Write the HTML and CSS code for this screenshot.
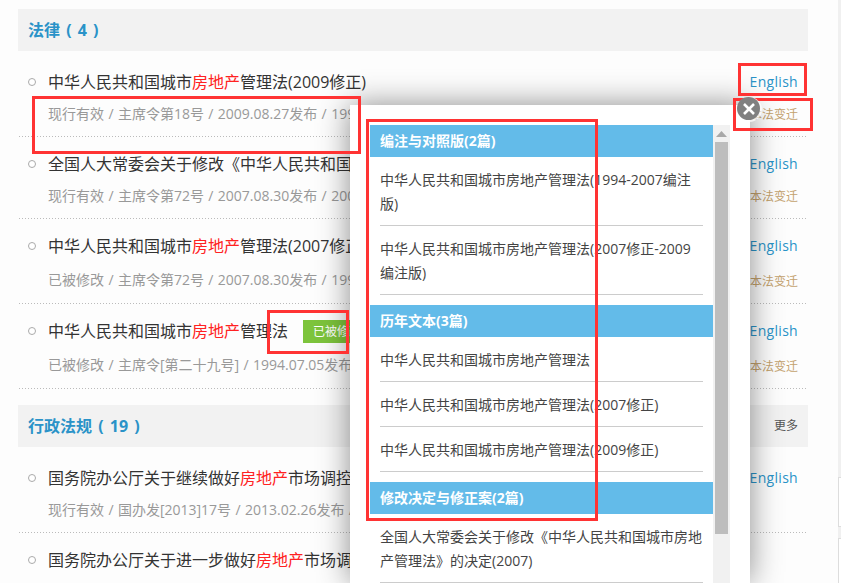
FILE: index.html
```html
<!DOCTYPE html>
<html lang="zh-CN">
<head>
<meta charset="utf-8">
<title>法律法规</title>
<link rel="stylesheet" href="styles.css">
</head>
<body>
<div class="layout">
  <main class="content">
    <section class="group">
      <header class="group-head"><h2 class="group-title">法律 ( 4 )</h2></header>
      <div class="row">
        <i class="bullet"></i>
        <div class="title">中华人民共和国城市<em>房地产</em>管理法(2009修正)</div>
        <a class="english">English</a>
        <div class="meta">现行有效 / 主席令第18号 / 2009.08.27发布 / 1995.01.01实施</div>
        <a class="history">本法变迁</a>
      </div>
      <div class="row">
        <i class="bullet"></i>
        <div class="title">全国人大常委会关于修改《中华人民共和国城市房地产管理法》的决定(2007)</div>
        <a class="english">English</a>
        <div class="meta">现行有效 / 主席令第72号 / 2007.08.30发布 / 2007.08.30实施</div>
        <a class="history">本法变迁</a>
      </div>
      <div class="row row-badged">
        <i class="bullet"></i>
        <div class="title">中华人民共和国城市<em>房地产</em>管理法(2007修正)</div>
        <a class="english">English</a>
        <div class="meta">已被修改 / 主席令第72号 / 2007.08.30发布 / 1995.01.01实施</div>
        <a class="history">本法变迁</a>
      </div>
      <div class="row row-badged">
        <i class="bullet"></i>
        <div class="title">中华人民共和国城市<em>房地产</em>管理法<span class="badge">已被修改</span></div>
        <a class="english">English</a>
        <div class="meta">已被修改 / 主席令[第二十九号] / 1994.07.05发布 / 1995.01.01实施</div>
        <a class="history">本法变迁</a>
      </div>
    </section>
    <section class="group">
      <header class="group-head"><h2 class="group-title">行政法规 ( 19 )</h2><a class="more">更多</a></header>
      <div class="row">
        <i class="bullet"></i>
        <div class="title">国务院办公厅关于继续做好<em>房地产</em>市场调控工作的通知</div>
        <a class="english">English</a>
        <div class="meta">现行有效 / 国办发[2013]17号 / 2013.02.26发布 / 2013.02.26实施</div>
      </div>
      <div class="row">
        <i class="bullet"></i>
        <div class="title">国务院办公厅关于进一步做好<em>房地产</em>市场调控工作有关问题的通知</div>
        <div class="meta">现行有效 / 国办发[2011]1号 / 2011.01.26发布 / 2011.01.26实施</div>
      </div>
    </section>
  </main>
  <aside class="rail">
    <div class="rail-box"></div>
    <div class="rail-box rail-box-last"></div>
  </aside>
</div>

<div class="popup">
  <div class="popup-list">
    <h3 class="popup-head">编注与对照版(2篇)</h3>
    <div class="popup-item">中华人民共和国城市房地产管理法(1994-2007编注版)</div>
    <div class="popup-item">中华人民共和国城市房地产管理法(2007修正-2009编注版)</div>
    <h3 class="popup-head">历年文本(3篇)</h3>
    <div class="popup-item">中华人民共和国城市房地产管理法</div>
    <div class="popup-item">中华人民共和国城市房地产管理法(2007修正)</div>
    <div class="popup-item">中华人民共和国城市房地产管理法(2009修正)</div>
    <h3 class="popup-head">修改决定与修正案(2篇)</h3>
    <div class="popup-item">全国人大常委会关于修改《中华人民共和国城市房地产管理法》的决定(2007)</div>
  </div>
  <div class="scrollbar">
    <svg class="scroll-arrow" width="11" height="6" viewBox="0 0 11 6"><path d="M5.5 0 L11 6 L0 6 Z" fill="#a8a8a8"/></svg>
    <div class="scroll-thumb"></div>
  </div>
</div>

<div class="mark mark-meta"></div>
<div class="mark mark-english"></div>
<div class="mark mark-history"></div>
<div class="mark mark-list"></div>
<div class="mark mark-badge"></div>

<button class="close" aria-label="关闭">
  <svg width="14" height="14" viewBox="0 0 14 14"><path d="M2 2 L12 12 M12 2 L2 12" stroke="#fff" stroke-width="2.6" fill="none"/></svg>
</button>
</body>
</html>
```
FILE: styles.css
```css
* { box-sizing: border-box; }
html, body { margin: 0; height: 583px; overflow: hidden; }
body {
  background: #fdfdfd;
  color: #333;
  font-family: "Open Sans", "Noto Sans CJK SC", sans-serif;
  position: relative;
}
.layout { display: flex; height: 583px; overflow: hidden; }
.content { width: 838px; flex: none; padding: 9px 30px 0 18px; }
.group { margin-bottom: 16px; }
.group-head {
  display: flex;
  justify-content: space-between;
  align-items: center;
  height: 42px;
  padding: 0 10px;
  margin-bottom: 4px;
  background: #f2f2f2;
}
.group-title { margin: 0 0 2px; font-size: 16px; font-weight: 700; color: #2a93c8; word-spacing: 2px; }
.more { font-size: 12px; color: #555; margin-bottom: 3px; }
.row {
  display: grid;
  grid-template-columns: 20px minmax(0, 1fr) auto;
  grid-template-rows: 24px 24px;
  row-gap: 8px;
  align-items: center;
  height: 82px;
  padding: 15px 10px 0;
  background-image: linear-gradient(to right, #bbb 50%, transparent 50%);
  background-size: 3px 1px;
  background-repeat: repeat-x;
  background-position: 0 100%;
  background-origin: content-box;
  background-clip: border-box;
}
.row-badged { height: 85px; row-gap: 10px; }
.row-badged .history { margin-top: 2px; }
.bullet {
  width: 8px;
  height: 8px;
  border: 1px solid #aaa;
  border-radius: 50%;
  background: #fff;
}
.title { font-size: 16px; line-height: 24px; white-space: nowrap; color: #333; }
.title em { font-style: normal; color: #f22; }
.badge {
  display: inline-block;
  margin-left: 15px;
  padding: 0 10px;
  height: 23px;
  line-height: 23px;
  font-size: 12px;
  color: #fff;
  background: #7dc43c;
  vertical-align: 1px;
}
.english { font-size: 14px; letter-spacing: .3px; color: #2a93c8; text-align: right; margin-bottom: 2px; }
.history { font-size: 12px; color: #c4a26e; text-align: right; grid-column: 3; }
.meta { grid-column: 2; font-size: 14px; word-spacing: .75px; color: #999; white-space: nowrap; margin-bottom: 2px; }

.rail { width: 3px; flex: none; background: #f0f0f0; padding-top: 477px; }
.rail-box { height: 50px; margin-bottom: 11px; background: #fff; border: 1px solid #ddd; border-right: 0; }
.rail-box-last { height: 60px; }

.popup {
  position: absolute;
  left: 350px;
  top: 105px;
  width: 400px;
  height: 478px;
  padding: 20px 20px 0;
  background: #fff;
  box-shadow: 0 0 30px rgba(0, 0, 0, .45);
  display: flex;
  overflow: hidden;
}
.popup-list { width: 343px; flex: none; }
.popup-head {
  margin: 10px 0 0;
  height: 32px;
  line-height: 32px;
  padding: 0 10px;
  font-size: 14px;
  font-weight: 700;
  color: #fff;
  background: #63bbe9;
}
.popup-head:first-child { margin-top: 0; }
.popup-item {
  margin: 0 10px;
  padding: 11px 0 9px;
  font-size: 14px;
  line-height: 24px;
  color: #444;
  border-bottom: 1px solid #ccc;
}
.scrollbar {
  width: 17px;
  flex: none;
  background: #f1f1f1;
  display: flex;
  flex-direction: column;
  align-items: center;
  height: 458px;
}
.scroll-arrow { margin: 6px 0 5px; flex: none; }
.scroll-thumb { width: 13px; height: 392px; background: #bdbdbd; }

.mark { position: absolute; border: 3px solid #f33; }
.mark-meta { left: 32px; top: 96px; width: 329px; height: 58px; }
.mark-english { left: 738px; top: 63px; width: 69px; height: 33px; }
.mark-history { left: 733px; top: 98px; width: 80px; height: 33px; }
.mark-list { left: 366px; top: 119px; width: 232px; height: 402px; }
.mark-badge { left: 267px; top: 310px; width: 82px; height: 44px; }

.close {
  position: absolute;
  left: 737px;
  top: 97px;
  width: 23px;
  height: 23px;
  padding: 0;
  border: 0;
  border-radius: 50%;
  background: #808080;
  box-shadow: 1px 1px 0 1px rgba(255, 255, 255, .7);
  display: flex;
  align-items: center;
  justify-content: center;
}
```
